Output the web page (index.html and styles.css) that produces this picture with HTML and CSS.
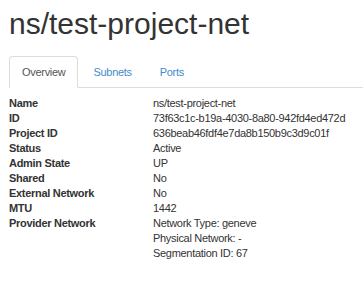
FILE: index.html
```html
<!DOCTYPE html>
<html lang="en">
<head>
  <meta charset="UTF-8">
  <title>Network Details</title>
  <link rel="stylesheet" href="styles.css">
</head>
<body>
<div class="detail-page">
  <h1 class="page-title">ns/test-project-net</h1>
  <ul class="nav-tabs">
    <li class="active"><a>Overview</a></li>
    <li><a>Subnets</a></li>
    <li><a>Ports</a></li>
  </ul>
  <dl class="detail-list">
    <dt>Name</dt>
    <dd>ns/test-project-net</dd>
    <dt>ID</dt>
    <dd>73f63c1c-b19a-4030-8a80-942fd4ed472d</dd>
    <dt>Project ID</dt>
    <dd>636beab46fdf4e7da8b150b9c3d9c01f</dd>
    <dt>Status</dt>
    <dd>Active</dd>
    <dt>Admin State</dt>
    <dd>UP</dd>
    <dt>Shared</dt>
    <dd>No</dd>
    <dt>External Network</dt>
    <dd>No</dd>
    <dt>MTU</dt>
    <dd>1442</dd>
    <dt>Provider Network</dt>
    <dd>
      <div>Network Type: geneve</div>
      <div>Physical Network: -</div>
      <div>Segmentation ID: 67</div>
    </dd>
  </dl>
</div>
</body>
</html>
```

FILE: styles.css
```css
* {
    box-sizing: border-box;
}

html, body {
    margin: 0;
    padding: 0;
    background: #ffffff;
}

.detail-page {
    padding: 0 0 0 9px;
    font-family: 'Liberation Sans', Arial, sans-serif;
    color: #333333;
}

.page-title {
    margin: 0;
    padding-top: 6px;
    font-size: 30px;
    font-weight: 400;
    line-height: 36px;
    color: #333333;
}

.nav-tabs {
    display: flex;
    list-style: none;
    margin: 14px 0 0 0;
    padding: 0;
    border-bottom: 1px solid #dddddd;
}

.nav-tabs li {
    margin-bottom: -1px;
}

.nav-tabs li a {
    display: block;
    padding: 0 12px;
    height: 32px;
    line-height: 31px;
    font-size: 11px;
    letter-spacing: -0.3px;
    color: #428bca;
    border: 1px solid transparent;
    border-radius: 4px 4px 0 0;
    margin-right: 2px;
}

.nav-tabs li.active a {
    color: #555555;
    background: #ffffff;
    border-color: #dddddd;
    border-bottom-color: transparent;
}

.detail-list {
    display: grid;
    grid-template-columns: 144px 1fr;
    margin: 8px 0 0 0;
    font-size: 11px;
    line-height: 15px;
    letter-spacing: -0.3px;
}

.detail-list dt {
    font-weight: 700;
}

.detail-list dd {
    margin: 0;
}
```
